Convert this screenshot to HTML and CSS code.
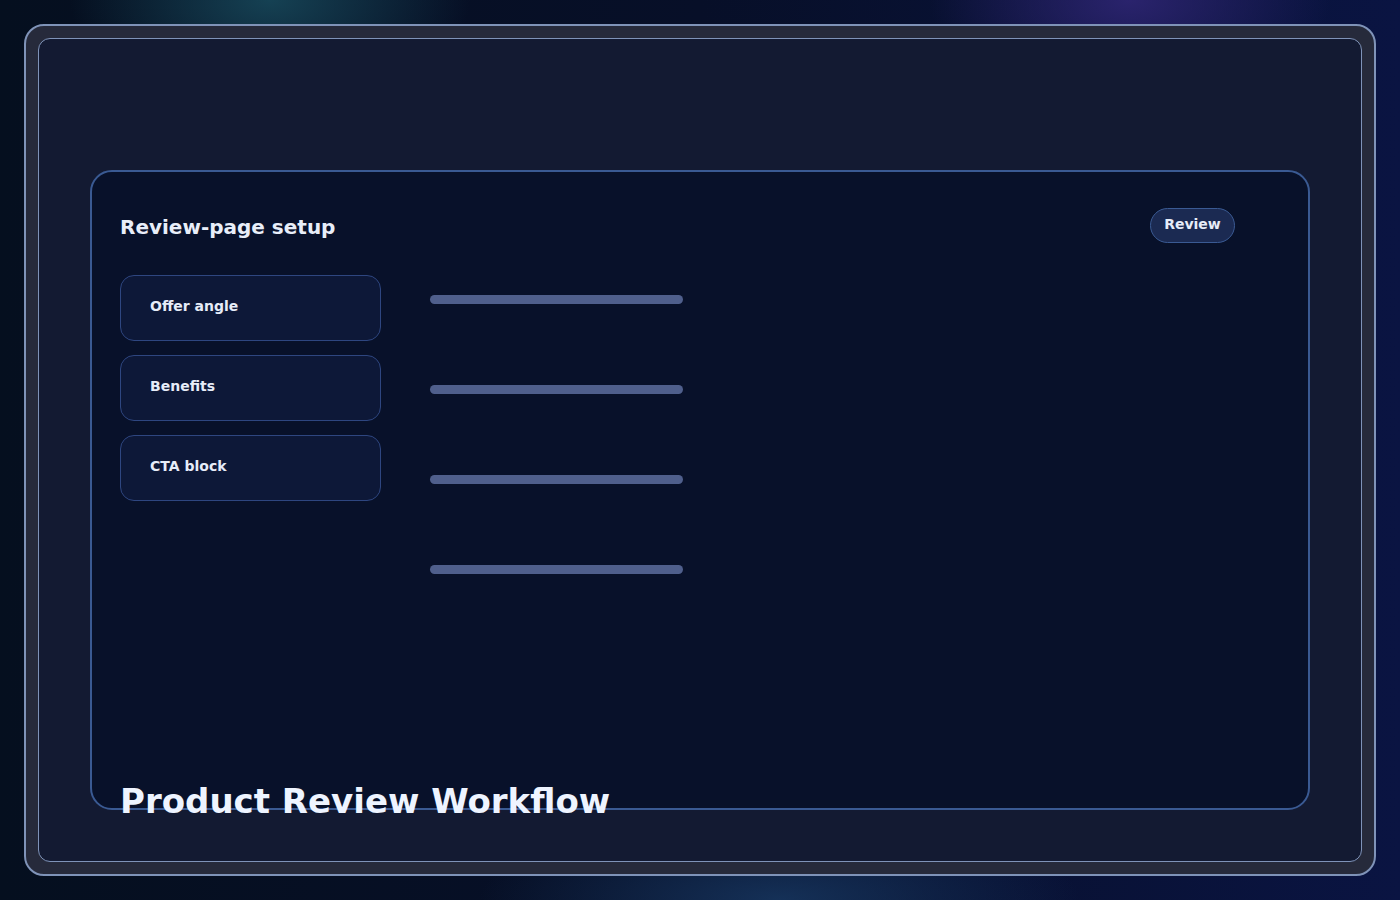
FILE: index.html
```html
<!DOCTYPE html>
<html lang="en">
<head>
<meta charset="utf-8">
<title>Product Review Workflow</title>
<link rel="stylesheet" href="styles.css">
</head>
<body>
<div class="device">
  <div class="screen">
    <section class="panel">
      <header class="panel-head">
        <h2 class="panel-title">Review-page setup</h2>
        <span class="pill">Review</span>
      </header>
      <div class="panel-body">
        <ul class="steps">
          <li class="step">Offer angle</li>
          <li class="step">Benefits</li>
          <li class="step">CTA block</li>
        </ul>
        <div class="lines">
          <span class="line"></span>
          <span class="line"></span>
          <span class="line"></span>
          <span class="line"></span>
        </div>
      </div>
    </section>
    <h1 class="hero-title">Product Review Workflow</h1>
  </div>
</div>
</body>
</html>
```
FILE: styles.css
```css
* { box-sizing: border-box; }

html, body {
  margin: 0;
  width: 1400px;
  height: 900px;
  overflow: hidden;
}

body {
  font-family: "DejaVu Sans", "Liberation Sans", sans-serif;
  background:
    radial-gradient(ellipse 200px 110px at 270px 0px, rgba(24, 74, 92, 0.85), rgba(24, 74, 92, 0) 100%),
    radial-gradient(ellipse 200px 110px at 1130px 0px, rgba(44, 36, 112, 0.95), rgba(44, 36, 112, 0) 100%),
    radial-gradient(ellipse 300px 90px at 780px 900px, rgba(22, 52, 92, 0.9), rgba(22, 52, 92, 0) 100%),
    linear-gradient(90deg, #050f1f 0%, #070f28 50%, #0a1442 100%);
  padding: 24px;
}

.device {
  height: 852px;
  border: 2px solid #7f93b8;
  border-radius: 20px;
  background: #262a3b;
  padding: 12px;
}

.screen {
  position: relative;
  height: 100%;
  border: 1px solid #7f93b8;
  border-radius: 12px;
  background: #131a32;
  padding: 131px 51px 0;
}

.panel {
  height: 640px;
  border: 2px solid #3a5a93;
  border-radius: 22px;
  background: #08112a;
  padding: 37px 28px 0;
}

.panel-head {
  display: flex;
  align-items: center;
  justify-content: space-between;
  padding-right: 45px;
  height: 36px;
}

.panel-title {
  margin: 0;
  font-size: 20px;
  font-weight: bold;
  color: #e8eef9;
}

.pill {
  display: inline-flex;
  align-items: center;
  justify-content: center;
  width: 85px;
  height: 35px;
  border: 1px solid #3a5a93;
  border-radius: 18px;
  background: #1b2a52;
  color: #e6ecf8;
  font-size: 14px;
  font-weight: bold;
  padding-bottom: 3px;
  margin-top: -4px;
}

.panel-body {
  display: flex;
  gap: 49px;
  margin-top: 30px;
}

.steps {
  list-style: none;
  margin: 0;
  padding: 0;
  width: 261px;
  display: flex;
  flex-direction: column;
  gap: 14px;
}

.step {
  height: 66px;
  display: flex;
  align-items: center;
  padding: 0 29px 4px;
  border: 1px solid #2e4680;
  border-radius: 14px;
  background: #0d1838;
  color: #e6ecf8;
  font-size: 14px;
  font-weight: bold;
}

.lines {
  display: flex;
  flex-direction: column;
  gap: 81px;
  padding-top: 20px;
}

.line {
  display: block;
  width: 253px;
  height: 9px;
  border-radius: 5px;
  background: #4f5f8c;
}

.hero-title {
  position: absolute;
  left: 81px;
  top: 740px;
  margin: 0;
  font-size: 34px;
  line-height: 44px;
  font-weight: bold;
  color: #eef4ff;
}
```
